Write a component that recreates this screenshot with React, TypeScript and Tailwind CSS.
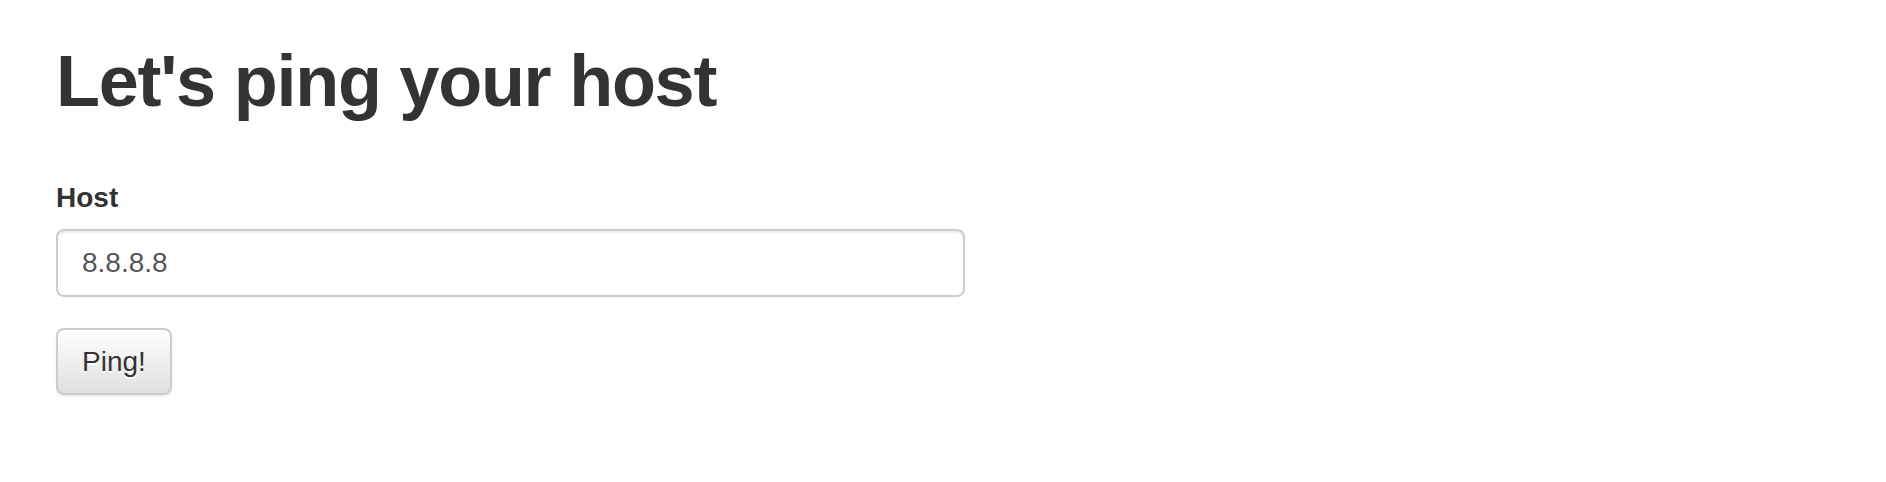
import React from "react";

export default function App() {
  return (
    <div
      className="min-h-screen bg-white pl-[56px] pt-[42px] text-[#333]"
      style={{ fontFamily: '"Liberation Sans", Arial, Helvetica, sans-serif' }}
    >
      <h1 className="text-[72px] leading-[79px] font-bold tracking-[-1.25px] text-[#333]">
        Let's ping your host
      </h1>
      <form onSubmit={(e) => e.preventDefault()}>
        <label className="block mt-[57px] text-[28px] leading-[40px] font-bold text-[#333]">
          Host
        </label>
        <input
          type="text"
          defaultValue="8.8.8.8"
          className="block mt-[11px] h-[68px] w-[909px] rounded-[8px] border-2 border-[#ccc] bg-white px-[24px] text-[28px] text-[#555] shadow-[inset_0_2px_2px_rgba(0,0,0,0.075)] outline-none"
        />
        <button
          type="submit"
          className="block mt-[31px] h-[67px] rounded-[8px] border-2 border-[#ccc] bg-gradient-to-b from-white to-[#e0e0e0] px-[24px] text-[28px] text-[#333] shadow-[inset_0_2px_0_rgba(255,255,255,0.15),0_2px_2px_rgba(0,0,0,0.075)] [text-shadow:0_2px_0_#fff]"
        >
          Ping!
        </button>
      </form>
    </div>
  );
}
